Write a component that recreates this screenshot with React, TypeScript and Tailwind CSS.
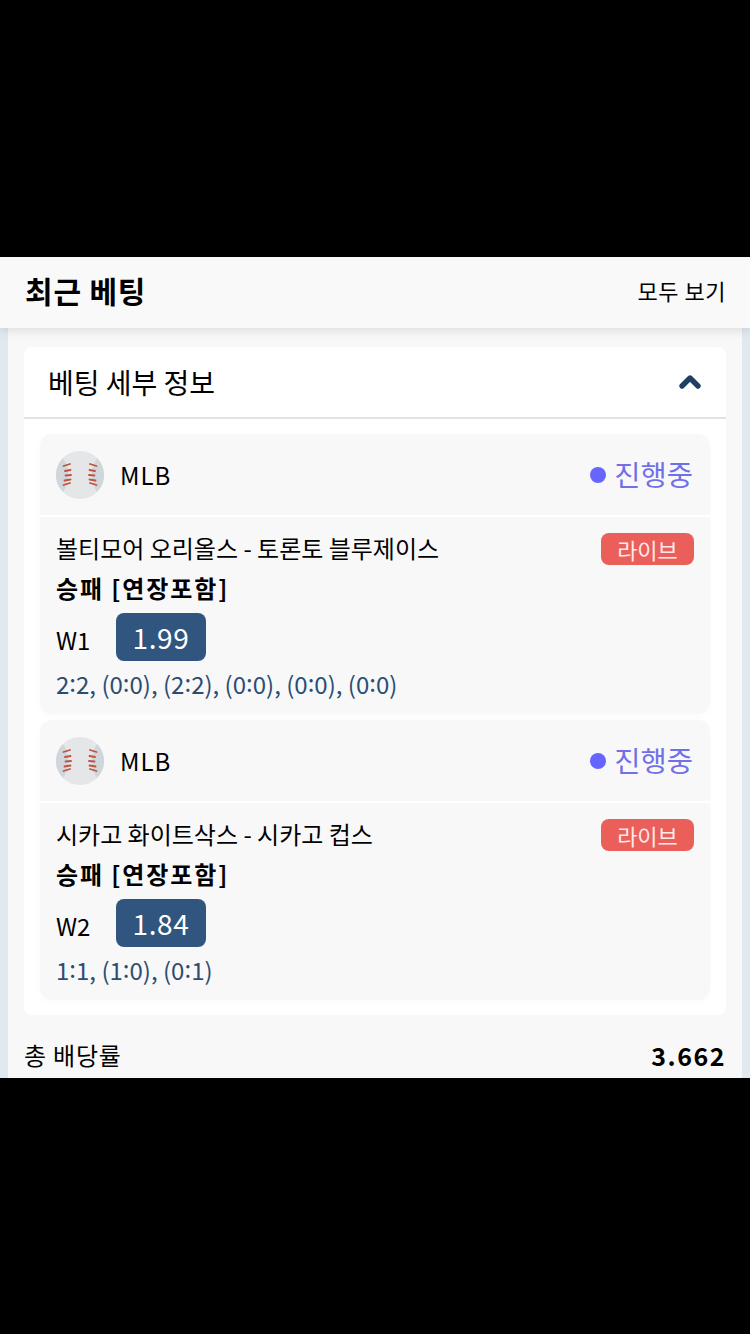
import { ChevronUp } from "lucide-react";

type Bet = {
  teams: string;
  pick: string;
  odds: string;
  score: string;
};

const bets: Bet[] = [
  {
    teams: "볼티모어 오리올스 - 토론토 블루제이스",
    pick: "W1",
    odds: "1.99",
    score: "2:2, (0:0), (2:2), (0:0), (0:0), (0:0)",
  },
  {
    teams: "시카고 화이트삭스 - 시카고 컵스",
    pick: "W2",
    odds: "1.84",
    score: "1:1, (1:0), (0:1)",
  },
];

function Baseball() {
  return (
    <svg width="48" height="48" viewBox="0 0 48 48" className="shrink-0">
      <circle cx="24" cy="24" r="24" fill="#e4e6e8" />
      <path d="M7 7 C14 17 14 31 7 41 A24 24 0 0 1 7 7Z" fill="#cfd6dc" />
      <path d="M41 7 C34 17 34 31 41 41 A24 24 0 0 0 41 7Z" fill="#cfd6dc" />
      <g stroke="#c0533f" strokeWidth="1.8" strokeLinecap="round" fill="none">
        <path d="M7.5 15 L14 13" />
        <path d="M9 20 L14.5 19" />
        <path d="M9.5 24.5 L15 24" />
        <path d="M8.5 29.5 L14.5 28.5" />
        <path d="M7.5 34 L14 32" />
        <path d="M40.5 15 L34 13" />
        <path d="M39 20 L33.5 19" />
        <path d="M38.5 24.5 L33 24" />
        <path d="M39.5 29.5 L33.5 28.5" />
        <path d="M40.5 34 L34 32" />
      </g>
    </svg>
  );
}

// the colons sit a little higher than the digits in the picture
function Score({ value }: { value: string }) {
  const parts = value.split(":");
  return (
    <>
      {parts.map((part, index) => (
        <span key={index}>
          {index > 0 && <span className="align-[2px]">:</span>}
          {part}
        </span>
      ))}
    </>
  );
}

function BetCard({ bet }: { bet: Bet }) {
  return (
    <div className="rounded-[12px] bg-[#f8f8f9] shadow-[0_2px_8px_rgba(0,0,0,0.02)]">
      <div className="flex h-[83px] items-center justify-between border-b-2 border-white pl-4 pr-[17px]">
        <div className="flex items-center gap-4">
          <Baseball />
          <span className="text-[24px] leading-none tracking-[1px] text-black">MLB</span>
        </div>
        <div className="flex items-center gap-2">
          <span className="h-4 w-4 rounded-full bg-[#6666ff]" />
          <span className="text-[28.5px] leading-none text-[#7070e8]">진행중</span>
        </div>
      </div>
      <div className="px-4 pt-[14px] pb-[12px]">
        <div className="flex items-start justify-between">
          <div className="text-[24px] leading-[34px] text-black">{bet.teams}</div>
          <div className="mt-[2px] flex h-8 w-[93px] items-center justify-center rounded-lg bg-[#eb5f5a] text-[22px] leading-none text-[#fbeaea]">
            라이브
          </div>
        </div>
        <div className="mt-[6px] text-[24px] font-bold leading-[34px] tracking-[1.9px] text-black">
          승패 [연장포함]
        </div>
        <div className="mt-[8px] flex items-center">
          <span className="w-[60px] pt-[6px] text-[24px] leading-none text-black">{bet.pick}</span>
          <span className="flex h-[48px] w-[90px] items-center justify-center rounded-lg bg-[#30567f] text-[28px] leading-none tracking-[0.6px] text-white">
            {bet.odds}
          </span>
        </div>
        <div className="mt-[3px] text-[24px] leading-[36px] text-[#2b4d73]">
          <Score value={bet.score} />
        </div>
      </div>
    </div>
  );
}

export default function App() {
  return (
    <div
      className="flex h-[1334px] w-[750px] flex-col overflow-hidden bg-black"
      style={{ fontFamily: '"Noto Sans CJK KR", "Noto Sans", sans-serif' }}
    >
      <div className="h-[257px] shrink-0" />
      <div className="flex h-[821px] shrink-0 flex-col bg-[#e0e8f0]">
        <div className="relative z-10 flex h-[71px] shrink-0 items-center justify-between bg-[#f9f9f9] pb-[6px] pl-[25px] pr-6 shadow-[0_2px_10px_rgba(0,0,0,0.12)]">
          <h1 className="text-[30px] font-bold leading-none tracking-[0.8px] text-black">최근 베팅</h1>
          <span className="text-[22px] leading-none tracking-[0.5px] text-black">모두 보기</span>
        </div>
        <div className="mx-2 flex-1 overflow-hidden bg-[#f8f8f8] px-4 pt-[19px]">
          <div className="rounded-lg bg-white pb-[15px]">
            <div className="flex h-[72px] items-center justify-between border-b-2 border-[#e2e2e8] pl-6 pr-5">
              <span className="text-[28px] leading-none text-black">베팅 세부 정보</span>
              <ChevronUp size={32} strokeWidth={4} className="text-[#1f3f63]" />
            </div>
            <div className="flex flex-col gap-[6px] px-4 pt-[15px]">
              {bets.map((bet) => (
                <BetCard key={bet.pick} bet={bet} />
              ))}
            </div>
          </div>
          <div className="mt-[23px] flex items-center justify-between">
            <span className="text-[24px] leading-[34px] tracking-[0.8px] text-black">총 배당률</span>
            <span className="text-[25px] font-bold leading-[34px] tracking-[1.5px] text-black">3.662</span>
          </div>
        </div>
      </div>
      <div className="flex-1" />
    </div>
  );
}
